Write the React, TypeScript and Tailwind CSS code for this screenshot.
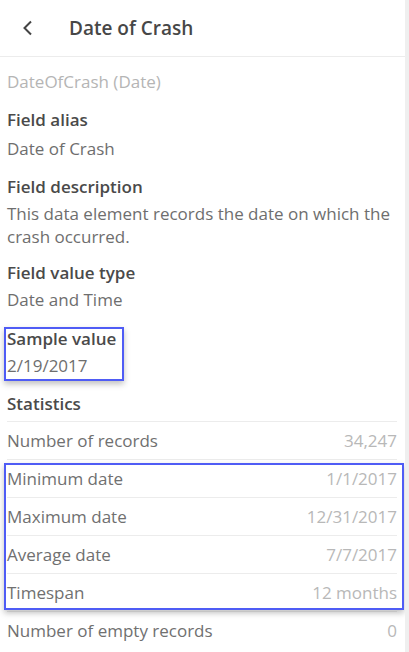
import React from "react";

const font = { fontFamily: "'Open Sans', Lato, sans-serif" };

function StatRow({ label, value }: { label: string; value: string }) {
  return (
    <div className="flex h-[38px] items-center justify-between border-t border-[#ececec] text-[17px]">
      <span className="text-[#707070]">{label}</span>
      <span className="text-[#b8b8b8]">{value}</span>
    </div>
  );
}

export default function App() {
  return (
    <div className="h-[652px] w-[409px] overflow-hidden bg-white border-r-[4px] border-[#efefef]" style={font}>
      <div className="flex h-[57px] items-center border-b border-[#ececec]">
        <svg className="ml-[22px]" width="12" height="16" viewBox="0 0 12 16" fill="none">
          <path d="M9 1.5L2.5 8L9 14.5" stroke="#444" strokeWidth="2" />
        </svg>
        <span className="ml-[35px] text-[19px] font-semibold text-[#474747]">Date of Crash</span>
      </div>
      <div className="pl-[7px] pr-[8px]">
        <div className="mt-[13px] h-[24px] leading-[24px] text-[17px] text-[#b5b5b5]">DateOfCrash (Date)</div>
        <div className="mt-[14px] leading-[24px] text-[17px] font-semibold text-[#4a4a4a]">Field alias</div>
        <div className="mt-[5px] leading-[24px] text-[17px] text-[#6e6e6e]">Date of Crash</div>
        <div className="mt-[14px] leading-[24px] text-[17px] font-semibold text-[#4a4a4a]">Field description</div>
        <div className="mt-[3px] leading-[23px] text-[17px] text-[#6e6e6e]">This data element records the date on which the crash occurred.</div>
        <div className="mt-[13px] leading-[24px] text-[17px] font-semibold text-[#4a4a4a]">Field value type</div>
        <div className="mt-[3px] leading-[24px] text-[17px] text-[#6e6e6e]">Date and Time</div>
        <div className="relative mt-[15px]">
          <div className="pointer-events-none absolute left-[-3px] top-0 h-[54px] w-[120px] border-2 border-[#4f5cf5] shadow-[0_3px_6px_rgba(0,0,0,0.25)]" />
          <div className="leading-[24px] text-[17px] font-semibold text-[#4a4a4a]">Sample value</div>
          <div className="mt-[3px] leading-[24px] text-[17px] text-[#6e6e6e]">2/19/2017</div>
        </div>
        <div className="mt-[14px] leading-[24px] text-[17px] font-semibold text-[#4a4a4a]">Statistics</div>
        <div className="mt-[5px]">
          <StatRow label="Number of records" value="34,247" />
          <div className="relative">
            <StatRow label="Minimum date" value="1/1/2017" />
            <StatRow label="Maximum date" value="12/31/2017" />
            <StatRow label="Average date" value="7/7/2017" />
            <StatRow label="Timespan" value="12 months" />
            <div className="pointer-events-none absolute left-[-3px] right-[-7px] top-[4px] bottom-[1px] border-2 border-[#4f5cf5] shadow-[0_3px_6px_rgba(0,0,0,0.25)]" />
          </div>
          <StatRow label="Number of empty records" value="0" />
        </div>
      </div>
    </div>
  );
}
